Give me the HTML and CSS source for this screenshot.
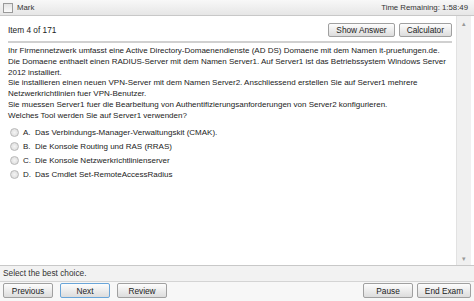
FILE: index.html
```html
<!DOCTYPE html>
<html lang="de">
<head>
    <meta charset="UTF-8">
    <title>Exam</title>
    <link rel="stylesheet" href="styles.css">
</head>
<body>
    <div class="topbar">
        <label class="mark"><span class="box"></span>Mark</label>
        <span class="timer">Time Remaining: 1:58:49</span>
    </div>
    <div class="main">
        <div class="content">
            <div class="itemrow">
                <span>Item 4 of 171</span>
                <div class="tools">
                    <button class="btn">Show Answer</button>
                    <button class="btn">Calculator</button>
                </div>
            </div>
            <div class="sep"></div>
            <div class="question">
                Ihr Firmennetzwerk umfasst eine Active Directory-Domaenendienste (AD DS) Domaene mit dem Namen it-pruefungen.de.<br>
                Die Domaene enthaelt einen RADIUS-Server mit dem Namen Server1. Auf Server1 ist das Betriebssystem Windows Server 2012 installiert.<br>
                Sie installieren einen neuen VPN-Server mit dem Namen Server2. Anschliessend erstellen Sie auf Server1 mehrere Netzwerkrichtlinien fuer VPN-Benutzer.<br>
                Sie muessen Server1 fuer die Bearbeitung von Authentifizierungsanforderungen von Server2 konfigurieren.<br>
                Welches Tool werden Sie auf Server1 verwenden?
            </div>
            <ul class="choices">
                <li><span class="radio"></span><span class="letter">A.</span>Das Verbindungs-Manager-Verwaltungskit (CMAK).</li>
                <li><span class="radio"></span><span class="letter">B.</span>Die Konsole Routing und RAS (RRAS)</li>
                <li><span class="radio"></span><span class="letter">C.</span>Die Konsole Netzwerkrichtlinienserver</li>
                <li><span class="radio"></span><span class="letter">D.</span>Das Cmdlet Set-RemoteAccessRadius</li>
            </ul>
        </div>
        <div class="scrollbar">
            <span class="arrow">&#9652;</span>
            <span class="arrow">&#9662;</span>
        </div>
    </div>
    <div class="status">Select the best choice.</div>
    <div class="navbar">
        <div class="group">
            <button class="btn nav">Previous</button>
            <button class="btn nav focus">Next</button>
            <button class="btn nav">Review</button>
        </div>
        <div class="group">
            <button class="btn nav">Pause</button>
            <button class="btn nav wide">End Exam</button>
        </div>
    </div>
</body>
</html>
```

FILE: styles.css
```css
body {
    margin: 0;
    width: 474px;
    height: 301px;
    font-family: "Liberation Sans", Arial, sans-serif;
    font-size: 8px;
    color: #222;
    background: #fff;
    display: flex;
    flex-direction: column;
    overflow: hidden;
}
.topbar {
    height: 15px;
    flex: none;
    display: flex;
    align-items: center;
    justify-content: space-between;
    padding: 0 6px 0 3px;
    background: linear-gradient(#f8f8f8, #e6e6e6);
    border-bottom: 1px solid #c8c8c8;
    color: #333;
    font-size: 7.8px;
}
.mark {
    display: flex;
    align-items: center;
    gap: 4px;
}
.box {
    width: 8px;
    height: 8px;
    border: 1px solid #9a9a9a;
    background: linear-gradient(#e4e4e4, #fafafa);
}
.main {
    flex: 1;
    display: flex;
    border-bottom: 1px solid #c8c8c8;
    min-height: 0;
}
.content {
    flex: 1;
    padding: 6px 4px 0 8px;
}
.itemrow {
    display: flex;
    justify-content: space-between;
    align-items: center;
    height: 16px;
    font-size: 8.3px;
}
.tools {
    display: flex;
    gap: 4px;
}
.btn {
    font-family: inherit;
    font-size: 8.3px;
    color: #222;
    height: 14px;
    padding: 0 7px;
    border: 1px solid #a0a0a0;
    border-radius: 2px;
    background: linear-gradient(#fdfdfd, #dcdcdc);
    line-height: 12px;
}
.sep {
    height: 2px;
    background: #d0d0d0;
    margin: 3px 0 3px;
}
.question {
    line-height: 10.8px;
    color: #222;
}
.choices {
    list-style: none;
    margin: 4px 0 0;
    padding: 0 0 0 2px;
}
.choices li {
    display: flex;
    align-items: center;
    height: 14px;
}
.radio {
    width: 7px;
    height: 7px;
    border: 1px solid #b8b8b8;
    border-radius: 50%;
    background: radial-gradient(#f4f4f4, #d8d8d8);
    margin-right: 4px;
}
.letter {
    width: 12px;
}
.scrollbar {
    width: 14px;
    margin-right: 3px;
    background: #f0f0f0;
    border-left: 1px solid #e2e2e2;
    display: flex;
    flex-direction: column;
    justify-content: space-between;
    align-items: center;
    font-size: 7px;
    color: #999;
    padding: 4px 0 2px;
}
.status {
    height: 15px;
    flex: none;
    line-height: 15px;
    padding-left: 3px;
    background: #f2f2f2;
    border-bottom: 1px solid #d4d4d4;
    color: #333;
    font-size: 8.3px;
}
.navbar {
    height: 18px;
    flex: none;
    display: flex;
    justify-content: space-between;
    align-items: flex-start;
    padding: 1px 3px 0;
    background: #f7f7f7;
}
.group {
    display: flex;
    gap: 7px;
}
.group + .group {
    gap: 4px;
}
.nav {
    width: 50px;
    height: 15px;
    padding: 0;
}
.wide {
    width: 54px;
}
.focus {
    border-color: #6aa5d8;
}
```
